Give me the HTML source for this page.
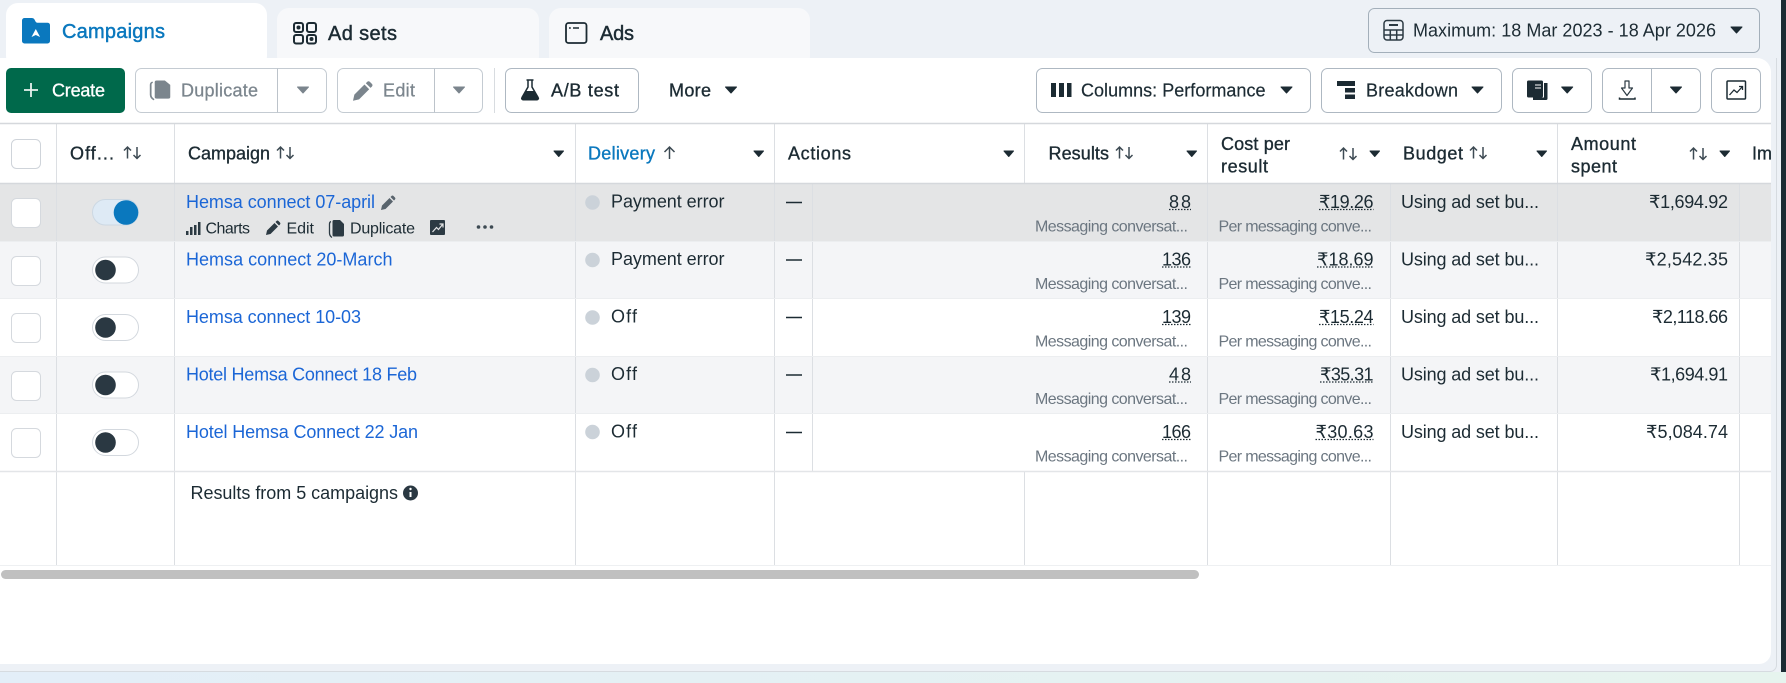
<!DOCTYPE html>
<html><head><meta charset="utf-8"><title>Campaigns</title>
<style>
html,body{margin:0;padding:0;width:1786px;height:683px;overflow:hidden;background:#edf1f6}
svg{display:block;font-family:"Liberation Sans",sans-serif}
text{white-space:pre}
.t{font-size:18px;fill:#1c2b33}
.m{font-size:18px;fill:#1c2b33;stroke:#1c2b33;stroke-width:.35}
.l{font-size:18px;fill:#1b66d6}
.s{font-size:16px;fill:#6b7680}
.a{font-size:16px;fill:#1c2b33}
.g{font-size:18px;fill:#7b858d;stroke:#7b858d;stroke-width:.25}
.tab{font-size:20px;fill:#1c2b33;stroke:#1c2b33;stroke-width:.45}
.b{fill:#fff;stroke:#aeb8c2;stroke-width:1}
.v{stroke:#dcdfe3;stroke-width:1}
</style></head><body>
<svg width="1786" height="683" viewBox="0 0 1786 683" xmlns="http://www.w3.org/2000/svg">
<defs>
<linearGradient id="bg" x1="0" x2="1" y1="0" y2="0"><stop offset="0" stop-color="#e3eef8"/><stop offset="1" stop-color="#e6f4ee"/></linearGradient>
<path id="c" d="M1 1h11l-5.500 6z" stroke-width="1" stroke-linejoin="round"/>
<path id="h" d="M.5.5h9.500l-4.750 5.500z" fill="#1c2b33" stroke="#1c2b33" stroke-linejoin="round"/>
<g id="so" fill="none" stroke="#3d4a53" stroke-width="1.500"><path d="M4.500 12.500V1M1 4.500 4.500 1 8 4.500M14 1v11.500M10.500 9 14 12.500 17.500 9"/></g>
<path id="p" d="M0 15 1 10.500 8.500 3 12 6.500 4.500 14zM9.500 2l1-1a1.500 1.500 0 0 1 2 0l1.500 1.500a1.500 1.500 0 0 1 0 2L13 5.500z"/>
<g id="d"><path d="M5 0h6l4 4v11a1.500 1.500 0 0 1-1.500 1.500H5A1.500 1.500 0 0 1 3.500 15V1.500A1.500 1.500 0 0 1 5 0z"/><path d="M2 1.500C.5 2 .5 3 .5 4v9c0 2 1 3.500 2.500 4.500" fill="none" stroke-width="1.300" stroke="currentColor"/></g>
</defs>

<!-- page backgrounds -->
<rect width="1786" height="683" fill="#edf1f6"/>
<rect y="672" width="1786" height="11" fill="url(#bg)"/>
<path d="M1776.500 58V665a6.500 6.500 0 0 1-6.500 6.500H0" fill="none" stroke="#d6dbe0"/>
<rect x="1781" width="5" height="672" fill="#1c2b33"/>

<!-- tabs -->
<rect x="277" y="8" width="262" height="60" rx="12" fill="#f7f8fa"/>
<rect x="549" y="8" width="261" height="60" rx="12" fill="#f7f8fa"/>
<rect x="6" y="3" width="261" height="65" rx="12" fill="#fff"/>

<!-- date -->
<rect x="1368.500" y="8.500" width="391" height="44" rx="6" fill="#edf1f6" stroke="#a3afba"/>

<!-- panel -->
<path d="M0 58H1757a14 14 0 0 1 14 14V652a12 12 0 0 1-12 12H0z" fill="#fff"/>

<!-- campaign tab icon + labels -->
<path d="M22 20.500a2.500 2.500 0 0 1 2.500-2.500H32a3 3 0 0 1 2.500 1.500l1 2a2 2 0 0 0 2 1.200H47.500a2.500 2.500 0 0 1 2.500 2.500V41a2.500 2.500 0 0 1-2.500 2.500h-23A2.500 2.500 0 0 1 22 41z" fill="#0a78be"/>
<path d="M31.500 37 35.800 29l4.300 8-4.300-2z" fill="#fff"/>
<text x="62" y="38" font-size="20" fill="#0a78be" stroke="#0a78be" stroke-width=".45" textLength="103">Campaigns</text>
<g fill="none" stroke="#1c2b33" stroke-width="2">
<rect x="294" y="23" width="9" height="9" rx="2"/><rect x="307" y="23" width="9" height="9" rx="2"/><rect x="294" y="35" width="9" height="8.500" rx="2"/><rect x="307" y="35" width="9" height="8.500" rx="2"/>
<rect x="566" y="23" width="20.500" height="20" rx="2.500" stroke-width="1.800"/>
</g>
<circle cx="298.500" cy="27.500" r="2" fill="#1c2b33"/><circle cx="311.500" cy="39" r="2" fill="#1c2b33"/>
<path d="M569 28h1.800M573 28h6" stroke="#1c2b33" stroke-width="1.500"/>
<text x="328" y="40" class="tab" textLength="69">Ad sets</text>
<text x="600" y="40" class="tab" textLength="34">Ads</text>

<!-- date contents -->
<g fill="none" stroke="#2c3a43" stroke-width="1.500"><rect x="1384" y="20.500" width="19" height="19.500" rx="3"/><path d="M1384 30h19M1384 35h19M1390.300 30v10M1396.700 30v10"/><path d="M1389 25h9" stroke-width="2"/></g>
<text x="1413" y="36.500" class="t" textLength="303">Maximum: 18 Mar 2023 - 18 Apr 2026</text>
<use href="#c" x="1730" y="26" fill="#1c2b33" stroke="#1c2b33"/>

<!-- left toolbar -->
<rect x="6" y="68" width="119" height="45" rx="5" fill="#00694b"/>
<path d="M31 83v14M24 90h14" stroke="#e8f3ee" stroke-width="1.800"/>
<text x="52" y="96.500" font-size="18" fill="#fff" stroke="#fff" stroke-width=".3" textLength="53">Create</text>

<rect class="b" x="135.500" y="68.500" width="191" height="44" rx="6" style="stroke:#c4cbd2"/>
<path d="M277.500 68.500v44" stroke="#bcc3ca"/>
<g transform="translate(150 80.500) scale(1.350 1.100)" fill="#7b858d" style="color:#7b858d"><use href="#d"/></g>
<text x="181" y="96.500" class="g" textLength="77">Duplicate</text>
<use href="#c" x="296.500" y="86" fill="#7b858d" stroke="#7b858d"/>

<rect class="b" x="337.500" y="68.500" width="145" height="44" rx="6" style="stroke:#c4cbd2"/>
<path d="M434.500 68.500v44" stroke="#bcc3ca"/>
<g transform="translate(353 80.500) scale(1.350)" fill="#7b858d"><use href="#p"/></g>
<text x="383" y="96.500" class="g" textLength="32">Edit</text>
<use href="#c" x="452.500" y="86" fill="#7b858d" stroke="#7b858d"/>

<path d="M494.500 68v45" stroke="#d8dce0"/>

<rect class="b" x="505.500" y="68.500" width="133" height="44" rx="6"/>
<path d="M526.500 80h7M528 80v7l-6 10.500a1.500 1.500 0 0 0 1.300 2.300h13.500a1.500 1.500 0 0 0 1.300-2.300L532 87v-7" fill="none" stroke="#1c2b33" stroke-width="1.500"/>
<path d="M525.500 91h9l3.500 7a1.300 1.300 0 0 1-1.200 2H522.700a1.300 1.300 0 0 1-1.200-2z" fill="#1c2b33"/>
<text x="551" y="96.500" class="m" textLength="68">A/B test</text>
<text x="669" y="96.500" class="m" textLength="42">More</text>
<use href="#c" x="724.500" y="86" fill="#1c2b33" stroke="#1c2b33"/>

<!-- right toolbar -->
<rect class="b" x="1036.500" y="68.500" width="274" height="44" rx="6"/>
<path d="M1051 83h5v14h-5zM1059 83h5v14h-5zM1067 83h4.500v14h-4.500z" fill="#1c2b33"/>
<text x="1081" y="96.500" class="t" style="stroke:#1c2b33;stroke-width:.2" textLength="184.500">Columns: Performance</text>
<use href="#c" x="1280" y="86" fill="#1c2b33" stroke="#1c2b33"/>

<rect class="b" x="1321.500" y="68.500" width="180" height="44" rx="6"/>
<path d="M1337 81h18v5h-18zM1345 88h10v4.500h-10zM1345 94.500h10V99h-10z" fill="#1c2b33"/>
<text x="1366" y="96.500" class="t" style="stroke:#1c2b33;stroke-width:.2" textLength="92">Breakdown</text>
<use href="#c" x="1471" y="86" fill="#1c2b33" stroke="#1c2b33"/>

<rect class="b" x="1512.500" y="68.500" width="79" height="44" rx="6"/>
<path d="M1544 83h3.500v15.500a1.500 1.500 0 0 1-1.500 1.500h-13v-2.500h11z" fill="#1c2b33"/>
<rect x="1527" y="80.500" width="16" height="17" rx="1.500" fill="#1c2b33"/>
<path d="M1535 85h6M1535 88h6" stroke="#fff"/>
<use href="#c" x="1560.700" y="86" fill="#1c2b33" stroke="#1c2b33"/>

<rect class="b" x="1602.500" y="68.500" width="98" height="44" rx="6"/>
<path d="M1651.500 68.500v44" stroke="#aeb8c2"/>
<path d="M1625 81h4v7h3.500l-5.500 7.500-5.500-7.500h3.500z" fill="none" stroke="#2c3a43" stroke-width="1.200" stroke-linejoin="round"/>
<path d="M1619.500 97.500v1.500h15.500v-1.500" fill="none" stroke="#1c2b33" stroke-width="1.500"/>
<use href="#c" x="1669.500" y="86" fill="#1c2b33" stroke="#1c2b33"/>

<rect class="b" x="1711.500" y="68.500" width="49" height="44" rx="6"/>
<rect x="1727" y="81" width="18.500" height="18" rx="1" fill="none" stroke="#1c2b33" stroke-width="1.500"/>
<path d="M1729.500 95l4.500-5 3 2.500 5-5.500M1739 86.500h3.500V90" fill="none" stroke="#1c2b33" stroke-width="1.300"/>

<!-- row backgrounds -->
<rect y="184" width="1771" height="57.500" fill="#e4e5e6"/>
<rect y="241.500" width="1771" height="57" fill="#f4f5f7"/>
<rect y="356.500" width="1771" height="57" fill="#f4f5f7"/>

<!-- grid lines -->
<path class="v" d="M56.500 124V565M174.500 124V565M575.500 124V565M774.500 124V565M1024.500 124V183M1024.500 472V565M1207.500 124V183M1207.500 184V565M1390.500 184V565M1557.500 124V565M1739.500 184V565M812.500 184V471"/>
<path d="M0 123.500H1771M0 183.500H1771" stroke="#d5d8dc" stroke-width="1.500"/>
<path d="M0 298.500H1771M0 356.500H1771M0 413.500H1771" stroke="#eceef0"/>
<path d="M0 241.500H1771" stroke="#eceef0"/>
<path d="M0 471.500H1771" stroke="#e3e5e8" stroke-width="1.500"/>
<path d="M0 565.500H1771" stroke="#eef0f2"/>

<!-- header -->
<rect x="11.500" y="139.500" width="29" height="29" rx="5" fill="#fff" stroke="#cfd4da"/>
<text x="70" y="159.500" class="m" textLength="44">Off...</text><use href="#so" x="123" y="146"/>
<text x="188" y="159.500" class="m" textLength="82">Campaign</text><use href="#so" x="276" y="146"/>
<use href="#h" x="553.500" y="150.500"/>
<text x="588" y="159.500" font-size="18" fill="#0a78be" stroke="#0a78be" stroke-width=".35" textLength="67">Delivery</text>
<path d="M669.500 159V147M664.500 152l5-5 5 5" fill="none" stroke="#3d4a53" stroke-width="1.500"/>
<use href="#h" x="753.500" y="150.500"/>
<text x="788" y="159.500" class="m" textLength="63">Actions</text>
<use href="#h" x="1003.500" y="150.500"/>
<text x="1048.500" y="159.500" class="m" textLength="60.500">Results</text><use href="#so" x="1115" y="146"/>
<use href="#h" x="1186.500" y="150.500"/>
<text x="1221" y="150" class="m" textLength="69">Cost per</text>
<text x="1221" y="172.500" class="m" textLength="47">result</text>
<use href="#so" x="1339" y="147"/>
<use href="#h" x="1369.500" y="150.500"/>
<text x="1403" y="159.500" class="m" textLength="60">Budget</text><use href="#so" x="1469" y="146"/>
<use href="#h" x="1536.500" y="150.500"/>
<text x="1571" y="150" class="m" textLength="65">Amount</text>
<text x="1571" y="172.500" class="m" textLength="46">spent</text>
<use href="#so" x="1689" y="147"/>
<use href="#h" x="1719.500" y="150.500"/>
<svg x="1740" y="130" width="31" height="50"><text x="12" y="29.500" class="m">Imp</text></svg>

<!-- row 1 -->
<rect x="11.500" y="198.500" width="29" height="29" rx="5" fill="#fff" stroke="#d5d9de"/>
<rect x="92.500" y="199.500" width="46" height="25.500" rx="12.750" fill="#deeaf5" stroke="#ccd8e3"/>
<circle cx="126" cy="212.500" r="12.300" fill="#0a78be"/>
<text x="186" y="208" class="l" textLength="189">Hemsa connect 07-april</text>
<use href="#p" x="381" y="195" fill="#59646d"/>
<path d="M186 231h2.500v4H186zM190 227h2.500v8H190zM194 225h2.500v10H194zM198 222h2.500v13H198z" fill="#2c3a43"/>
<text x="205.500" y="233.500" class="a" textLength="44.500">Charts</text>
<use href="#p" x="266" y="220" fill="#2c3a43"/>
<text x="286.500" y="233.500" class="a" textLength="27.500">Edit</text>
<use href="#d" x="329" y="220" fill="#2c3a43" style="color:#2c3a43"/>
<text x="350" y="233.500" class="a" textLength="65">Duplicate</text>
<rect x="430" y="220" width="15" height="15" rx="1" fill="#2c3a43"/>
<path d="M432.500 232l4-4.500 2 2 4-5M439.500 224h3.500v3.500" fill="none" stroke="#e4e5e6" stroke-width="1.200"/>
<circle cx="478.500" cy="227" r="1.800" fill="#3d4a53"/><circle cx="485" cy="227" r="1.800" fill="#3d4a53"/><circle cx="491.500" cy="227" r="1.800" fill="#3d4a53"/>
<circle cx="592.500" cy="202.500" r="7.300" fill="#cbd2d9"/>
<text x="611" y="207.500" class="t" textLength="113.500">Payment error</text>
<path d="M786 202.500h16" stroke="#1c2b33" stroke-width="1.500"/>
<text x="1169" y="208" class="t" textLength="22">88</text>
<path d="M1169 209.500h22" stroke="#1c2b33" stroke-width="1.200" stroke-dasharray="1.500 1.500"/>
<text x="1035" y="231.500" class="s" textLength="153">Messaging conversat...</text>
<text x="1319" y="208" class="t" textLength="54.500">₹19.26</text>
<path d="M1319 209.500h54.500" stroke="#1c2b33" stroke-width="1.200" stroke-dasharray="1.500 1.500"/>
<text x="1218.500" y="231.500" class="s" textLength="153.500">Per messaging conve...</text>
<text x="1401" y="208" class="t" textLength="138">Using ad set bu...</text>
<text x="1649" y="208" class="t" textLength="79">₹1,694.92</text>

<!-- row 2 -->
<rect x="11.500" y="256.500" width="29" height="29" rx="5" fill="#fff" stroke="#d5d9de"/>
<rect x="92.500" y="257" width="46" height="26" rx="13" fill="#fff" stroke="#d3d8de"/>
<circle cx="105.500" cy="270" r="10.300" fill="#2a3842"/>
<text x="186" y="265.500" class="l" textLength="206.500">Hemsa connect 20-March</text>
<circle cx="592.500" cy="260" r="7.300" fill="#cbd2d9"/>
<text x="611" y="265" class="t" textLength="113.500">Payment error</text>
<path d="M786 260h16" stroke="#1c2b33" stroke-width="1.500"/>
<text x="1162" y="265.500" class="t" textLength="29">136</text>
<path d="M1162 267h29" stroke="#1c2b33" stroke-width="1.200" stroke-dasharray="1.500 1.500"/>
<text x="1035" y="289" class="s" textLength="153">Messaging conversat...</text>
<text x="1317" y="265.500" class="t" textLength="56.500">₹18.69</text>
<path d="M1317 267h56.500" stroke="#1c2b33" stroke-width="1.200" stroke-dasharray="1.500 1.500"/>
<text x="1218.500" y="289" class="s" textLength="153.500">Per messaging conve...</text>
<text x="1401" y="265.500" class="t" textLength="138">Using ad set bu...</text>
<text x="1645" y="265.500" class="t" textLength="83">₹2,542.35</text>

<!-- row 3 -->
<rect x="11.500" y="313.500" width="29" height="29" rx="5" fill="#fff" stroke="#d5d9de"/>
<rect x="92.500" y="314.500" width="46" height="26" rx="13" fill="#fff" stroke="#d3d8de"/>
<circle cx="105.500" cy="327.500" r="10.300" fill="#2a3842"/>
<text x="186" y="323" class="l" textLength="175">Hemsa connect 10-03</text>
<circle cx="592.500" cy="317.500" r="7.300" fill="#cbd2d9"/>
<text x="611" y="322.500" class="t" textLength="26">Off</text>
<path d="M786 317.500h16" stroke="#1c2b33" stroke-width="1.500"/>
<text x="1162" y="323" class="t" textLength="29">139</text>
<path d="M1162 324.500h29" stroke="#1c2b33" stroke-width="1.200" stroke-dasharray="1.500 1.500"/>
<text x="1035" y="346.500" class="s" textLength="153">Messaging conversat...</text>
<text x="1319" y="323" class="t" textLength="54.500">₹15.24</text>
<path d="M1319 324.500h54.500" stroke="#1c2b33" stroke-width="1.200" stroke-dasharray="1.500 1.500"/>
<text x="1218.500" y="346.500" class="s" textLength="153.500">Per messaging conve...</text>
<text x="1401" y="323" class="t" textLength="138">Using ad set bu...</text>
<text x="1652" y="323" class="t" textLength="76">₹2,118.66</text>

<!-- row 4 -->
<rect x="11.500" y="371.500" width="29" height="29" rx="5" fill="#fff" stroke="#d5d9de"/>
<rect x="92.500" y="372" width="46" height="26" rx="13" fill="#fff" stroke="#d3d8de"/>
<circle cx="105.500" cy="385" r="10.300" fill="#2a3842"/>
<text x="186" y="380.500" class="l" textLength="231">Hotel Hemsa Connect 18 Feb</text>
<circle cx="592.500" cy="375" r="7.300" fill="#cbd2d9"/>
<text x="611" y="380" class="t" textLength="26">Off</text>
<path d="M786 375h16" stroke="#1c2b33" stroke-width="1.500"/>
<text x="1169" y="380.500" class="t" textLength="22">48</text>
<path d="M1169 382h22" stroke="#1c2b33" stroke-width="1.200" stroke-dasharray="1.500 1.500"/>
<text x="1035" y="404" class="s" textLength="153">Messaging conversat...</text>
<text x="1320" y="380.500" class="t" textLength="53.500">₹35.31</text>
<path d="M1320 382h53.500" stroke="#1c2b33" stroke-width="1.200" stroke-dasharray="1.500 1.500"/>
<text x="1218.500" y="404" class="s" textLength="153.500">Per messaging conve...</text>
<text x="1401" y="380.500" class="t" textLength="138">Using ad set bu...</text>
<text x="1650" y="380.500" class="t" textLength="78">₹1,694.91</text>

<!-- row 5 -->
<rect x="11.500" y="428.500" width="29" height="29" rx="5" fill="#fff" stroke="#d5d9de"/>
<rect x="92.500" y="429.500" width="46" height="26" rx="13" fill="#fff" stroke="#d3d8de"/>
<circle cx="105.500" cy="442.500" r="10.300" fill="#2a3842"/>
<text x="186" y="438" class="l" textLength="232">Hotel Hemsa Connect 22 Jan</text>
<circle cx="592.500" cy="432" r="7.300" fill="#cbd2d9"/>
<text x="611" y="437.500" class="t" textLength="26">Off</text>
<path d="M786 432.500h16" stroke="#1c2b33" stroke-width="1.500"/>
<text x="1162" y="438" class="t" textLength="29">166</text>
<path d="M1162 439.500h29" stroke="#1c2b33" stroke-width="1.200" stroke-dasharray="1.500 1.500"/>
<text x="1035" y="461.500" class="s" textLength="153">Messaging conversat...</text>
<text x="1315.500" y="438" class="t" textLength="58">₹30.63</text>
<path d="M1315.500 439.500h58" stroke="#1c2b33" stroke-width="1.200" stroke-dasharray="1.500 1.500"/>
<text x="1218.500" y="461.500" class="s" textLength="153.500">Per messaging conve...</text>
<text x="1401" y="438" class="t" textLength="138">Using ad set bu...</text>
<text x="1646" y="438" class="t" textLength="82">₹5,084.74</text>

<!-- footer -->
<text x="190.500" y="499" class="t" textLength="207.500">Results from 5 campaigns</text>
<circle cx="410.500" cy="493" r="7.500" fill="#2a3842"/>
<path d="M410.500 492v5" stroke="#fff" stroke-width="2"/><circle cx="410.500" cy="489" r="1.200" fill="#fff"/>

<!-- scrollbar -->
<rect x="1" y="570" width="1198" height="9" rx="4.500" fill="#c0c0c0"/>
</svg>
</body></html>
